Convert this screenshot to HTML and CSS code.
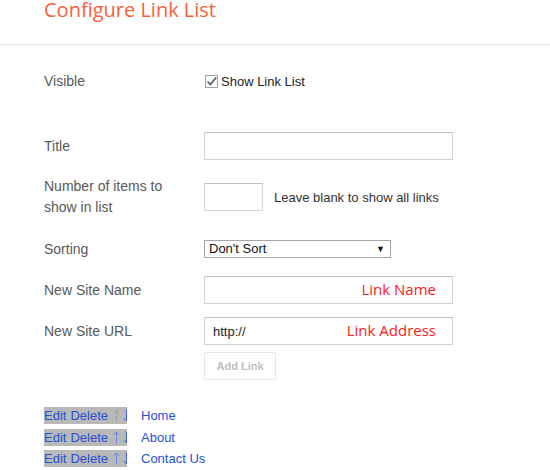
FILE: index.html
```html
<!DOCTYPE html>
<html>
<head>
<meta charset="utf-8">
<link rel="stylesheet" href="styles.css">
</head>
<body>
<header class="header">
  <h1 class="title">Configure Link List</h1>
</header>
<form class="form">
  <div class="row row-visible">
    <label class="label">Visible</label>
    <div class="field">
      <span class="check"><svg width="11" height="11" viewBox="0 0 11 11"><path d="M1.5 5.5 L4.3 8.6 L10.2 1.6" fill="none" stroke="#555" stroke-width="1.6"/></svg></span>
      <span class="check-text">Show Link List</span>
    </div>
  </div>
  <div class="row row-title">
    <label class="label">Title</label>
    <div class="field"><input class="text-input wide" type="text"></div>
  </div>
  <div class="row row-number">
    <label class="label two-line">Number of items to show in list</label>
    <div class="field">
      <input class="text-input narrow" type="text">
      <span class="hint">Leave blank to show all links</span>
    </div>
  </div>
  <div class="row row-sort">
    <label class="label">Sorting</label>
    <div class="field">
      <div class="select-box">
        <select class="select"><option>Don't Sort</option></select>
        <span class="select-arrow">▼</span>
      </div>
    </div>
  </div>
  <div class="row row-name">
    <label class="label">New Site Name</label>
    <div class="field">
      <div class="input-wrap">
        <input class="text-input wide" type="text">
        <span class="note">Link Name</span>
      </div>
    </div>
  </div>
  <div class="row row-url">
    <label class="label">New Site URL</label>
    <div class="field">
      <div class="input-wrap">
        <input class="text-input wide url" type="text" value="http://">
        <span class="note">Link Address</span>
      </div>
    </div>
  </div>
  <div class="row row-button">
    <span></span>
    <div class="field"><button class="add-btn" type="button">Add Link</button></div>
  </div>
</form>
<ul class="links">
  <li class="link-row">
    <span class="actions"><a class="act">Edit</a> <a class="act">Delete</a>
      <svg class="arrow off" width="7" height="13" viewBox="0 0 7 13"><path d="M3.5 12.5 V1 M0.8 3.8 L3.5 1 L6.2 3.8" fill="none" stroke="currentColor" stroke-width="1"/></svg><svg class="arrow down" width="7" height="13" viewBox="0 0 7 13"><path d="M3.5 0.5 V12 M0.8 9.2 L3.5 12 L6.2 9.2" fill="none" stroke="currentColor" stroke-width="1"/></svg></span>
    <a class="link">Home</a>
  </li>
  <li class="link-row">
    <span class="actions"><a class="act">Edit</a> <a class="act">Delete</a>
      <svg class="arrow up" width="7" height="13" viewBox="0 0 7 13"><path d="M3.5 12.5 V1 M0.8 3.8 L3.5 1 L6.2 3.8" fill="none" stroke="currentColor" stroke-width="1"/></svg><svg class="arrow down" width="7" height="13" viewBox="0 0 7 13"><path d="M3.5 0.5 V12 M0.8 9.2 L3.5 12 L6.2 9.2" fill="none" stroke="currentColor" stroke-width="1"/></svg></span>
    <a class="link">About</a>
  </li>
  <li class="link-row">
    <span class="actions"><a class="act">Edit</a> <a class="act">Delete</a>
      <svg class="arrow up" width="7" height="13" viewBox="0 0 7 13"><path d="M3.5 12.5 V1 M0.8 3.8 L3.5 1 L6.2 3.8" fill="none" stroke="currentColor" stroke-width="1"/></svg><svg class="arrow down" width="7" height="13" viewBox="0 0 7 13"><path d="M3.5 0.5 V12 M0.8 9.2 L3.5 12 L6.2 9.2" fill="none" stroke="currentColor" stroke-width="1"/></svg></span>
    <a class="link">Contact Us</a>
  </li>
</ul>
</body>
</html>
```
FILE: styles.css
```css
html, body {
  margin: 0;
  padding: 0;
  background: #fff;
}
body {
  font-family: "Liberation Sans", Arial, sans-serif;
  font-size: 13px;
  color: #555;
  width: 550px;
  height: 470px;
  overflow: hidden;
}
.header {
  height: 45px;
  border-bottom: 1px solid #e3e3e3;
  padding-left: 44px;
  box-sizing: border-box;
}
.title {
  margin: 0;
  font-family: "Open Sans", sans-serif;
  font-weight: 400;
  font-size: 20px;
  line-height: 20px;
  color: #f95f3c;
}
.form {
  margin: 0;
  padding-left: 44px;
}
.row {
  display: grid;
  grid-template-columns: 160px 1fr;
  align-items: center;
}
.label {
  color: #595959;
  font-size: 14px;
  line-height: 21px;
}
.two-line {
  width: 130px;
}
.field {
  display: flex;
  align-items: center;
}
.row-visible { margin-top: 25px; height: 22px; }
.row-title { margin-top: 40px; height: 28px; }
.row-number { margin-top: 16px; height: 42px; }
.row-sort { margin-top: 17px; height: 28px; }
.row-name { margin-top: 13px; height: 28px; }
.row-url { margin-top: 13px; height: 28px; }
.row-button { margin-top: 7px; height: 28px; }

.check {
  width: 11px;
  height: 11px;
  border: 1px solid #a0a0a0;
  margin-left: 1px;
  display: flex;
  align-items: center;
  justify-content: center;
  background: #fff;
}
.check svg { display: block; }
.check-text {
  margin-left: 3px;
  color: #222;
}
.text-input {
  box-sizing: border-box;
  height: 28px;
  border: 1px solid #d4d4d4;
  border-top-color: #c0c0c0;
  background: #fff;
  padding: 0 8px;
  margin: 0;
  font-family: "Liberation Sans", Arial, sans-serif;
  font-size: 13px;
  color: #333;
  outline: none;
}
.wide { width: 249px; }
.narrow { width: 59px; }
.url { color: #222; }
.hint {
  margin-left: 11px;
  color: #333;
}
.select-box {
  box-sizing: border-box;
  width: 187px;
  height: 18px;
  border: 1px solid #a6a6a6;
  display: flex;
  align-items: center;
  background: #fff;
}
.select {
  appearance: none;
  -webkit-appearance: none;
  border: none;
  background: transparent;
  flex: 1;
  font-family: "Liberation Sans", Arial, sans-serif;
  font-size: 13px;
  color: #111;
  padding: 0 0 0 4px;
  height: 16px;
  line-height: 16px;
  outline: none;
}
.select-arrow {
  font-size: 9px;
  color: #111;
  margin-right: 5px;
}
.input-wrap {
  position: relative;
}
.note {
  position: absolute;
  right: 17px;
  top: 3px;
  font-family: "Open Sans", sans-serif;
  font-size: 15px;
  line-height: 20px;
  color: #ff1a1a;
  pointer-events: none;
}
.add-btn {
  box-sizing: border-box;
  width: 72px;
  height: 28px;
  border: 1px solid #e8e8e8;
  border-radius: 2px;
  background: #fff;
  color: #c0c0c0;
  font-family: "Liberation Sans", Arial, sans-serif;
  font-weight: bold;
  font-size: 11px;
  padding: 0;
}
.links {
  list-style: none;
  margin: 27px 0 0 0;
  padding: 0 0 0 44px;
}
.link-row {
  display: flex;
  align-items: center;
  height: 17px;
  margin-bottom: 4.5px;
}
.actions {
  background: #b9b9b9;
  height: 17px;
  line-height: 17px;
  width: 83px;
  white-space: nowrap;
  display: flex;
  align-items: center;
  overflow: hidden;
}
.act {
  color: #2650d8;
  margin-right: 4px;
}
.act + .act { margin-right: 0; }
.arrow {
  color: #3f63dd;
  margin-left: 5px;
  display: block;
  flex-shrink: 0;
}
.arrow.down { margin-left: 3px; }
.arrow.up { color: #6a86e2; }
.arrow.off { color: #9aa8a0; }
.link {
  margin-left: 14px;
  color: #2650d8;
}
```
